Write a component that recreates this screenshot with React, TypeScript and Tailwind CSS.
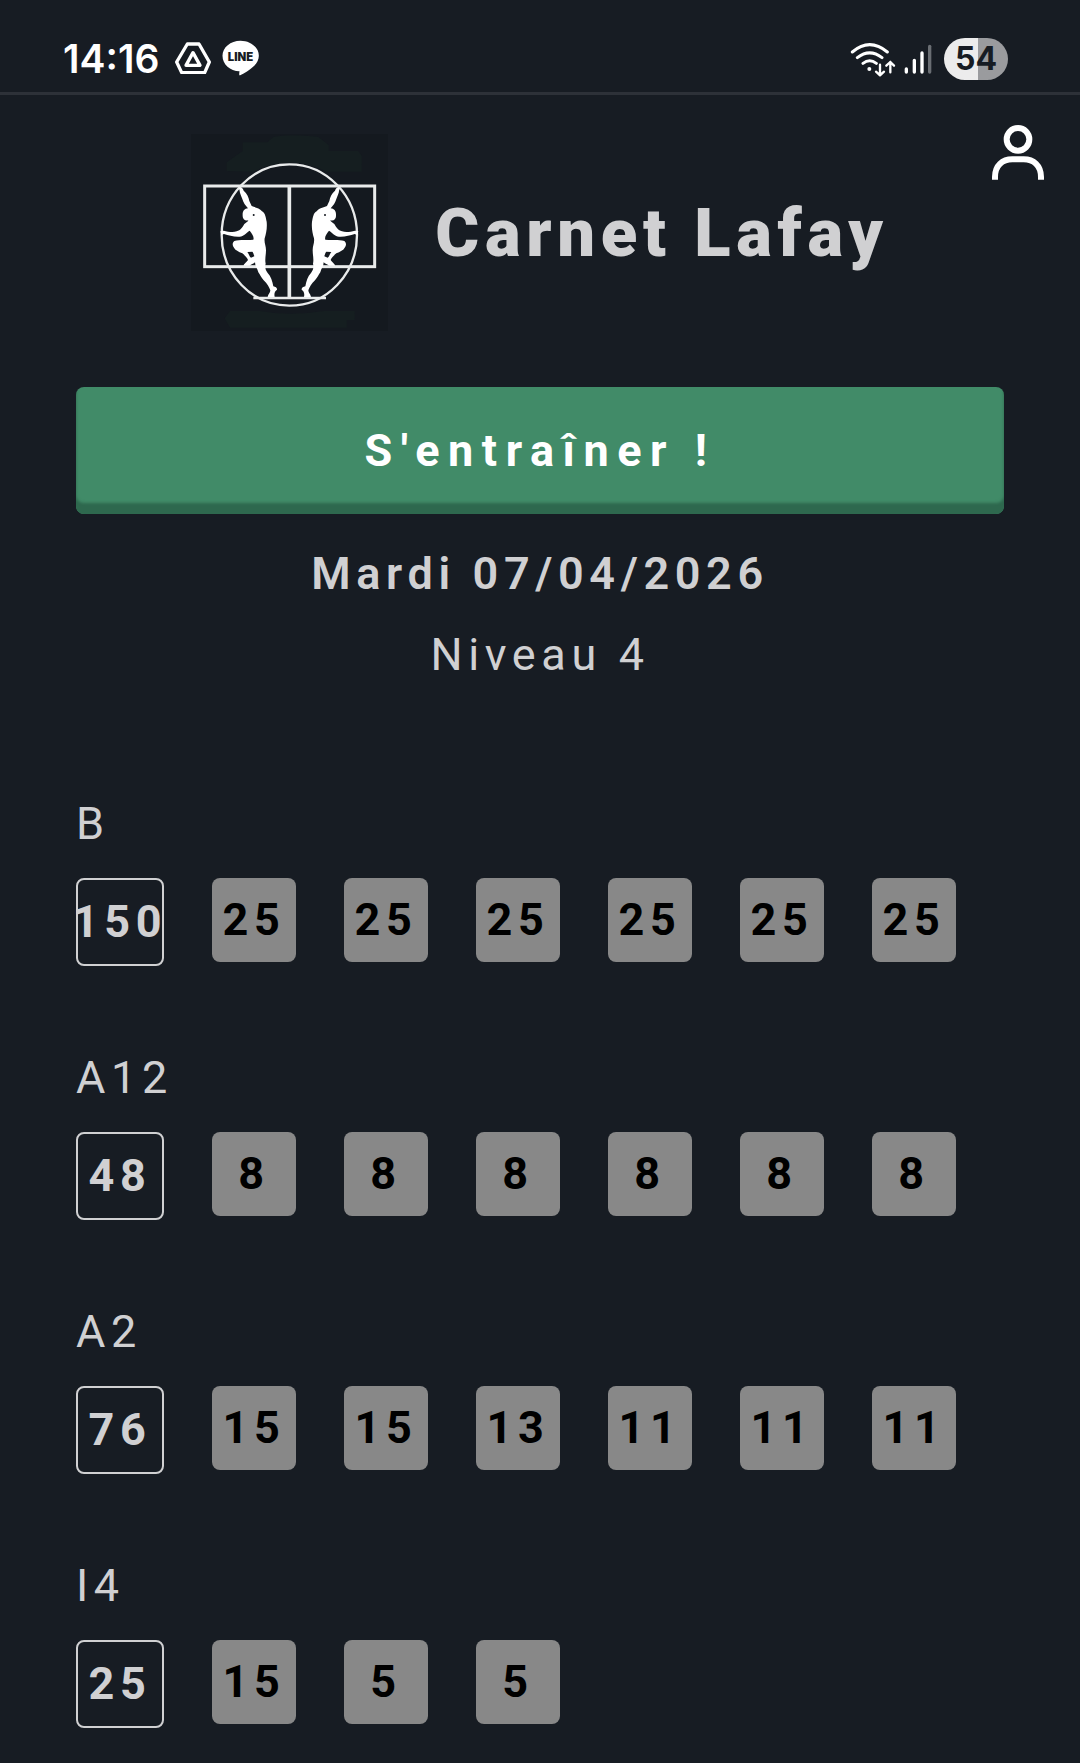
import React from "react";

type Exercise = { name: string; total: number; sets: number[] };

const EXERCISES: Exercise[] = [
  { name: "B", total: 150, sets: [25, 25, 25, 25, 25, 25] },
  { name: "A12", total: 48, sets: [8, 8, 8, 8, 8, 8] },
  { name: "A2", total: 76, sets: [15, 15, 13, 11, 11, 11] },
  { name: "I4", total: 25, sets: [15, 5, 5] },
];

function DriveIcon() {
  return (
    <svg viewBox="406 70 108 96" className="h-8 w-9" fill="none" stroke="#fff" strokeLinejoin="round">
      <path d="M443 76h35l31 54-14 32h-69l-15-32z" strokeWidth="10" />
      <path d="M460 102l21 38h-42z" strokeWidth="10" />
    </svg>
  );
}

function LineIcon() {
  return (
    <svg viewBox="546 64 110 108" className="h-9 w-[37px]">
      <path d="M601 66c30 0 55 20 55 45 0 13-7 25-18 34-10 9-24 18-38 25-4 1-3-3-2-12-28-1-51-21-51-47 0-25 24-45 54-45z" fill="#fff" />
      <text x="601" y="126" textAnchor="middle" fontSize="34" fontWeight="900" fill="#171c23" className="font-['Inter',sans-serif]">LINE</text>
    </svg>
  );
}

function WifiIcon() {
  return (
    <svg viewBox="84 62 138 105" className="h-[35px] w-[46px]" fill="none" stroke="#fff" strokeLinecap="round" strokeLinejoin="round">
      <path d="M91 92q52-44 105 0M106 109q37-29 74 0M123 126q20-15 40 0" strokeWidth="9" />
      <circle cx="142" cy="143" r="6" fill="#fff" stroke="none" />
      <path d="M174 130v31M162 151l12 11 12-11M205 153v-31M193 133l12-11 11 11" strokeWidth="7" />
    </svg>
  );
}

function SignalIcon() {
  return (
    <svg viewBox="247 70 84 90" className="h-[30px] w-7" fill="none" stroke="#fff" strokeLinecap="round" strokeWidth="10">
      <path d="M254 145v9M278 119v35M301 97v57" />
      <path d="M324 77v77" stroke="#6a6e73" />
    </svg>
  );
}

const FIGURE =
  "M177 190C182 183 188 189 191 197C201 205 206 216 208 228L215 243C225 248 239 249 246 259C256 264 257 277 260 290C262 310 258 326 254 340C252 354 258 361 258 376C258 390 254 402 257 416C254 426 256 434 263 444C273 454 277 468 280 484C287 485 292 489 291 494C284 499 282 505 284 516H263C264 508 271 503 271 496C267 485 262 477 251 466C243 456 240 449 235 442C232 430 225 424 225 412C221 417 213 418 209 422H191C190 418 200 411 204 405C202 398 194 391 187 385C176 380 165 375 162 368C156 361 157 353 163 348C179 343 204 347 220 344C223 337 217 326 209 317C199 323 191 334 179 335C161 336 146 331 132 327L124 330L121 319L131 317C145 321 160 323 170 319C182 316 187 307 193 297C199 291 207 288 204 286C195 289 187 281 188 271C187 259 193 251 204 250C196 241 190 233 187 222C183 211 179 204 179 198ZM202 381C207 387 208 395 213 398L223 394C221 387 220 383 217 380Z";

function Logo() {
  return (
    <svg viewBox="33 27 591 591" role="img" aria-label="Carnet Lafay" className="size-[197px] shrink-0 bg-[#14191f]">
      <path d="M140 138V112L188 78V52H262L280 36Q330 26 415 36L446 60V78H535L545 92V140H440Q330 85 220 140z" fill="#151e20" />
      <path d="M134 580L150 558H240Q330 575 430 558H524V585H500V608H150z" fill="#151e20" />
      <g fill="none" stroke="#e9ebeb">
        <rect x="74" y="183" width="510" height="242" strokeWidth="9" />
        <path d="M328 183v335" strokeWidth="11" />
        <path d="M220 519h218" strokeWidth="7" />
        <ellipse cx="328" cy="330" rx="203" ry="212" strokeWidth="7" />
      </g>
      <g fill="#fff" fillRule="evenodd">
        <path d={FIGURE} />
        <path d={FIGURE} transform="matrix(-1 0 0 1 656 0)" />
      </g>
      <g fill="#14191f">
        <circle cx="221" cy="270" r="3" />
        <circle cx="435" cy="270" r="3" />
      </g>
    </svg>
  );
}

function StatusBar() {
  return (
    <div className="flex h-[95px] items-end justify-between border-b-3 border-[#2d3138] pr-[72px] pl-[63px]">
      <div className="flex h-[63px] items-start gap-4">
        <span className="font-['Inter',sans-serif] text-[39px] leading-[60px] font-semibold text-white">14:16</span>
        <div className="flex h-[58px] items-center gap-[11px]">
          <DriveIcon />
          <LineIcon />
        </div>
      </div>
      <div className="flex h-[54px] items-start gap-2">
        <div className="flex h-[42px] items-center gap-2">
          <WifiIcon />
          <SignalIcon />
        </div>
        <div className="ml-1 flex h-[42px] w-16 items-center justify-center rounded-full bg-linear-to-r from-[#ececec] from-53% to-[#9a9b9e] to-53% font-['Inter',sans-serif] text-[32px] font-bold text-[#171c23]">
          54
        </div>
      </div>
    </div>
  );
}

function ExerciseRow({ name, total, sets }: Exercise) {
  return (
    <section>
      <h2 className="leading-[54px]">{name}</h2>
      <div className="mt-[27px] flex items-start gap-12 font-bold">
        <div className="flex size-[88px] shrink-0 items-center justify-center rounded-lg border-2 border-[#d0d0d2]">{total}</div>
        {sets.map((reps, i) => (
          <div key={i} className="flex size-[84px] shrink-0 items-center justify-center rounded-lg bg-[#888] text-black">
            {reps}
          </div>
        ))}
      </div>
    </section>
  );
}

export default function App() {
  return (
    <div className="min-h-screen bg-[#171c23] pb-9 font-['Roboto',sans-serif] text-[45px] tracking-[0.125em] text-[#d0d0d2]">
      <div className="tracking-normal">
        <StatusBar />
      </div>
      <header className="relative flex items-center justify-center gap-[47px] pt-[39px]">
        <Logo />
        <h1 className="text-[67px] leading-[80px] font-black tracking-[0.085em]">Carnet Lafay</h1>
        <button type="button" aria-label="Profil" className="absolute top-[30px] right-9">
          <svg viewBox="516 316 156 165" className="h-[55px] w-[52px]" fill="none" stroke="#fff" strokeWidth="18">
            <circle cx="594" cy="359" r="34" />
            <path d="M525 480v-8c0-34 22-53 52-53h34c30 0 52 19 52 53v8" />
          </svg>
        </button>
      </header>
      <main className="px-[76px] pt-14">
        <button
          type="button"
          className="h-[127px] w-full rounded-lg bg-[#418b68] font-bold tracking-[0.19em] text-white shadow-[inset_0_-11px_3px_#2e684e]"
        >
          S'entraîner !
        </button>
        <div className="pt-[33px] text-center leading-[54px]">
          <p className="font-semibold">Mardi 07/04/2026</p>
          <p className="mt-[27px]">Niveau 4</p>
        </div>
        <div className="flex flex-col gap-[85px] pt-[115px]">
          {EXERCISES.map((e) => (
            <ExerciseRow key={e.name} {...e} />
          ))}
        </div>
      </main>
    </div>
  );
}
